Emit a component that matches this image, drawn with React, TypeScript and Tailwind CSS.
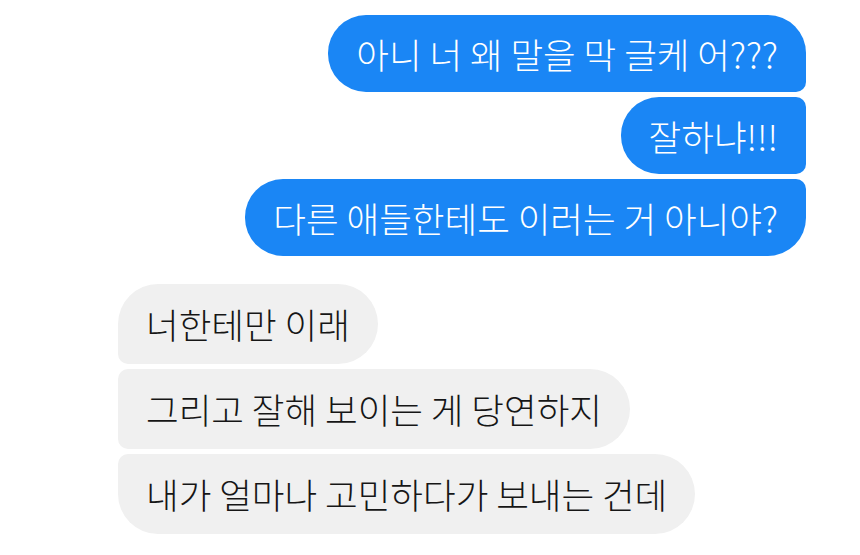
const FONT = "font-['Noto_Sans_CJK_KR','Noto_Sans',sans-serif]";

type Msg = { text: string; shape: string };

const SENT: Msg[] = [
  { text: "아니 너 왜 말을 막 글케 어???", shape: "rounded-[38px] rounded-br-[10px]" },
  { text: "잘하냐!!!", shape: "rounded-[38px] rounded-tr-[10px] rounded-br-[10px]" },
  { text: "다른 애들한테도 이러는 거 아니야?", shape: "rounded-[38px] rounded-tr-[10px]" },
];

const RECEIVED: Msg[] = [
  { text: "너한테만 이래", shape: "rounded-[40px] rounded-bl-[10px]" },
  { text: "그리고 잘해 보이는 게 당연하지", shape: "rounded-[40px] rounded-tl-[10px] rounded-bl-[10px]" },
  { text: "내가 얼마나 고민하다가 보내는 건데", shape: "rounded-[40px] rounded-tl-[10px]" },
];

export default function App() {
  return (
    <div className={`w-[860px] h-[555px] bg-white overflow-hidden ${FONT}`}>
      <div className="pt-[15px] pl-[118px] pr-[54px] flex flex-col">
        {/* outgoing */}
        <div className="flex flex-col items-end gap-[5px]">
          {SENT.map((m) => (
            <div
              key={m.text}
              className={`h-[77px] flex items-center px-[28px] bg-[#1a86f5] text-white text-[35.5px] font-light leading-none whitespace-nowrap ${m.shape}`}
            >
              {m.text}
            </div>
          ))}
        </div>

        {/* incoming */}
        <div className="mt-[28px] flex flex-col items-start gap-[5px]">
          {RECEIVED.map((m) => (
            <div
              key={m.text}
              className={`h-[80px] flex items-center px-[28px] bg-[#f0f0f0] text-[#161616] text-[35.5px] font-light leading-none whitespace-nowrap ${m.shape}`}
            >
              {m.text}
            </div>
          ))}
        </div>
      </div>
    </div>
  );
}
